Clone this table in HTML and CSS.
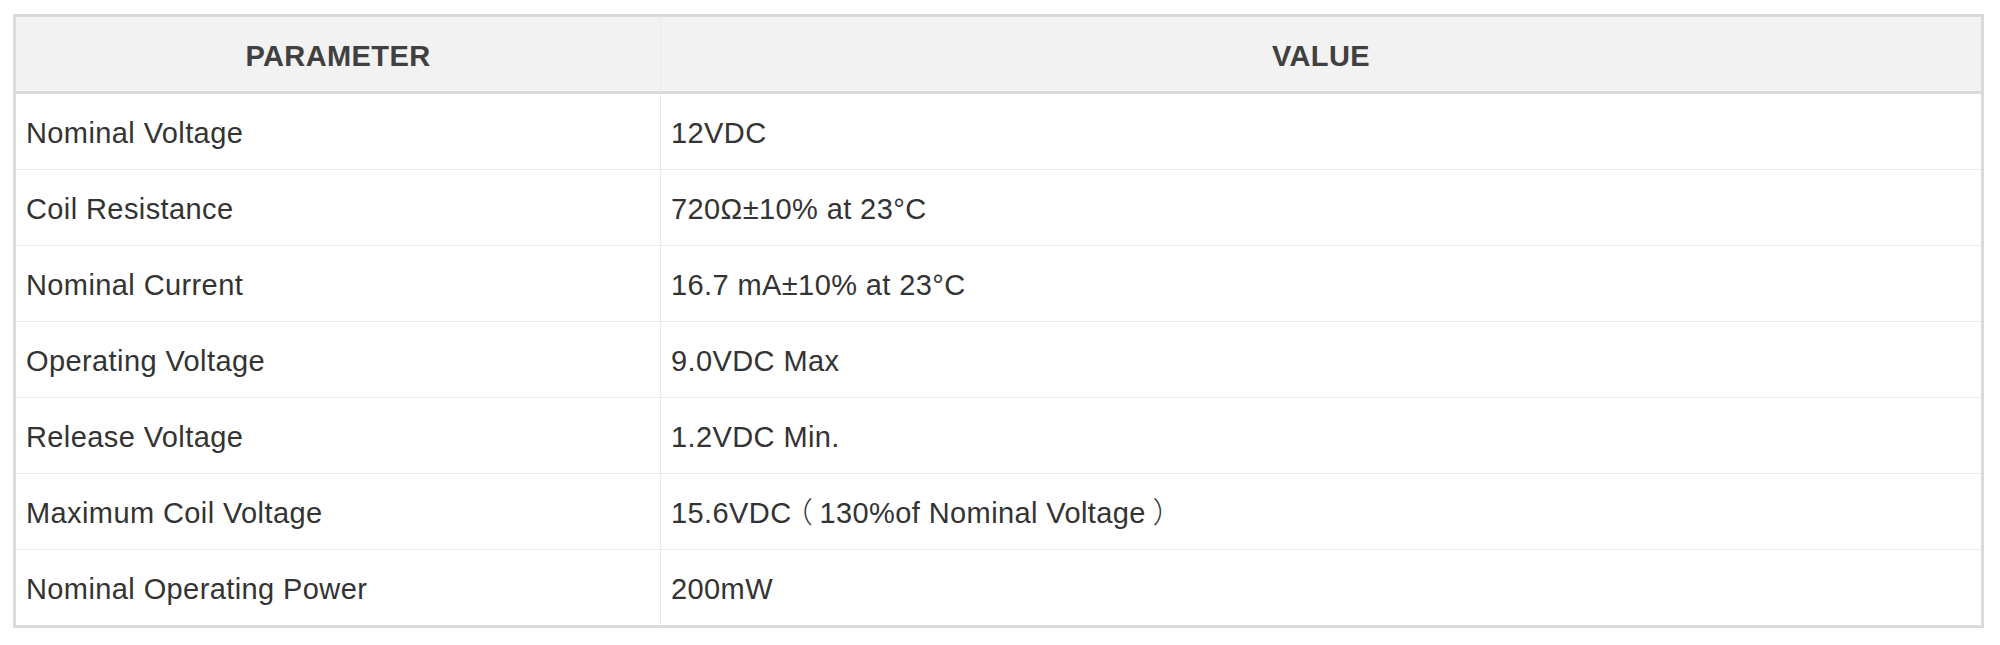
FILE: index.html
```html
<!DOCTYPE html>
<html lang="en">
<head>
<meta charset="utf-8">
<title>Coil Parameters</title>
<link rel="stylesheet" href="styles.css">
</head>
<body>
<div class="wrap">
  <table class="spec">
    <thead>
      <tr>
        <th class="col-param">PARAMETER</th>
        <th class="col-value">VALUE</th>
      </tr>
    </thead>
    <tbody>
      <tr><td>Nominal Voltage</td><td>12VDC</td></tr>
      <tr><td>Coil Resistance</td><td>720Ω±10% at 23°C</td></tr>
      <tr><td>Nominal Current</td><td>16.7 mA±10% at 23°C</td></tr>
      <tr><td>Operating Voltage</td><td>9.0VDC Max</td></tr>
      <tr><td>Release Voltage</td><td>1.2VDC Min.</td></tr>
      <tr><td>Maximum Coil Voltage</td><td>15.6VDC<span class="fw">（</span>130%of Nominal Voltage<span class="fw">）</span></td></tr>
      <tr><td>Nominal Operating Power</td><td>200mW</td></tr>
    </tbody>
  </table>
</div>
</body>
</html>
```

FILE: styles.css
```css
html, body {
  margin: 0;
  padding: 0;
  background: #ffffff;
}

.wrap {
  padding: 14px 0 0 13px;
}

.spec {
  width: 1971px;
  border-collapse: separate;
  border-spacing: 0;
  border: 3px solid #dadada;
  font-family: "Liberation Sans", Arial, "Noto Sans CJK SC", sans-serif;
  font-size: 29px;
  letter-spacing: 0.4px;
  color: #333333;
  table-layout: fixed;
}

.spec th {
  background: #f2f2f2;
  color: #404040;
  font-weight: bold;
  text-align: center;
  height: 70px;
  padding: 4px 10px 0;
  vertical-align: middle;
  border-bottom: 3px solid #dadada;
}

.spec .col-param {
  width: 624px;
  border-right: 1px solid #e9e9e9;
}

.spec td {
  height: 71px;
  padding: 4px 10px 0;
  vertical-align: middle;
  text-align: left;
  border-bottom: 1px solid #ebebeb;
}

.spec td:first-child {
  border-right: 1px solid #ebebeb;
}

.spec tbody tr:last-child td {
  border-bottom: none;
}

.fw {
  display: inline-block;
  width: 28px;
  line-height: 0;
  text-align: center;
  letter-spacing: 0;
  font-family: "Noto Sans CJK SC", sans-serif;
  font-weight: 300;
  font-feature-settings: "halt" 1;
}
```
